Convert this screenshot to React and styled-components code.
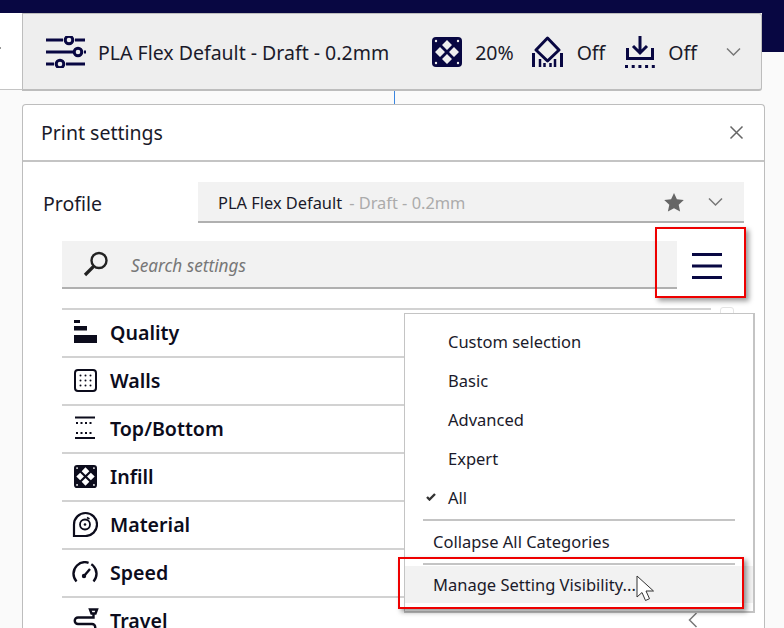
import React from "react";
import styled, { createGlobalStyle } from "styled-components";

const NAVY = "#080742";
const INK = "#1a1a2a";
const DARK = "#0c0c1c";

const Global = createGlobalStyle`
  html, body { margin: 0; padding: 0; background: #fafafa; }
  * { box-sizing: border-box; }
`;

const Page = styled.div`
  position: relative;
  width: 784px;
  height: 628px;
  overflow: hidden;
  background: #fafafa;
  font-family: "Noto Sans", sans-serif;
  color: ${INK};
`;

const Header = styled.header`
  display: flex;
  height: 91px;
  padding-top: 13px;
  background: linear-gradient(${NAVY} 13px, #fafafa 13px);
`;
const LeftStub = styled.div`
  width: 22px;
  height: 77px;
  background: #fff;
  border-bottom: 1px solid #c4c4c4;
  &::after {
    content: "";
    display: block;
    width: 1px;
    height: 2px;
    background: #999;
    margin-top: 34px;
  }
`;
const RightStub = styled.div`
  width: 22px;
  height: 39px;
  background: ${NAVY};
`;
const Toolbar = styled.div`
  width: 740px;
  height: 78px;
  display: flex;
  align-items: center;
  padding: 0 20px 0 23px;
  background: #eeeeee;
  border: 1px solid #bdbdbd;
  border-width: 1px 1px 2px 1px;
  border-radius: 0 3px 3px 0;
`;
const ToolbarLabel = styled.span`
  font-size: 19.5px;
  line-height: 26px;
  margin-left: ${(p) => p.$gap}px;
  margin-right: ${(p) => p.$after || 0}px;
  white-space: nowrap;
  position: relative;
  top: 1px;
`;
const Connector = styled.div`
  width: 1px;
  height: 13px;
  margin-left: 394px;
  background: #3a86e0;
`;

const Panel = styled.section`
  width: 743px;
  height: 540px;
  margin-left: 22px;
  background: #fff;
  border: 1px solid #bdbdbd;
  border-bottom: 0;
  border-radius: 4px 4px 0 0;
`;
const PanelHead = styled.div`
  height: 57px;
  display: flex;
  align-items: center;
  justify-content: space-between;
  padding: 0 20px 0 18px;
  border-bottom: 2px solid #c4c4c4;
`;
const PanelTitle = styled.h2`
  margin: 0;
  font-size: 19.5px;
  font-weight: 400;
  line-height: 26px;
`;
const ProfileRow = styled.div`
  display: flex;
  align-items: center;
  height: 41px;
  margin-top: 20px;
  padding-right: 20px;
`;
const ProfileLabel = styled.span`
  width: 175px;
  padding-left: 20px;
  font-size: 19.5px;
  line-height: 26px;
  position: relative;
  top: 1px;
`;
const ProfileSelect = styled.div`
  flex: 1;
  height: 41px;
  display: flex;
  align-items: center;
  padding: 1px 21px 0 20px;
  background: #f2f2f2;
  border-bottom: 2px solid #b0b0b0;
  font-size: 16.4px;
`;
const ProfileName = styled.span`
  line-height: 22px;
  position: relative;
  top: 1px;
`;
const ProfileDim = styled(ProfileName)`
  color: #ababab;
  margin-left: 7px;
`;
const Spacer = styled.div`
  flex: ${(p) => (p.$w ? `0 0 ${p.$w}px` : 1)};
`;
const SearchRow = styled.div`
  display: flex;
  height: 48px;
  margin: 18px 0 0 39px;
`;
const SearchBox = styled.div`
  width: 615px;
  height: 48px;
  display: flex;
  align-items: center;
  padding: 0 0 1px 21px;
  background: #f2f2f2;
  border-bottom: 2px solid #b0b0b0;
`;
const SearchText = styled.span`
  margin-left: 22px;
  font-size: 17.2px;
  font-style: italic;
  color: #777;
  position: relative;
  top: 2px;
`;
const MenuButton = styled.div`
  width: 60px;
  display: flex;
  align-items: center;
  justify-content: center;
  padding-top: 2px;
`;
const List = styled.div`
  width: 649px;
  margin: 19px 0 0 39px;
`;
const Row = styled.div`
  height: 48px;
  display: flex;
  align-items: center;
  padding: 0 0 2px 12px;
  border-top: 2px solid #d2d2d2;
`;
const RowIcon = styled.div`
  width: 36px;
  display: flex;
  align-items: center;
`;
const RowLabel = styled.span`
  font-size: 19.6px;
  font-weight: 600;
  color: ${DARK};
`;

const Menu = styled.div`
  position: absolute;
  left: 404px;
  top: 313px;
  width: 351px;
  height: 300px;
  padding-top: 8px;
  background: #fff;
  border: 1px solid #c4c4c4;
  border-width: 1px 2px 2px 1px;
`;
const MenuItem = styled.div`
  height: 39px;
  display: flex;
  align-items: center;
  padding-left: 43px;
  font-size: 16.5px;
  position: relative;
`;
const Check = styled.span`
  position: absolute;
  left: 21px;
  top: 15px;
  display: flex;
`;
const Rule = styled.div`
  height: 2px;
  margin: ${(p) => p.$mt || 0}px 18px 0;
  background: #c4c4c4;
`;
const MenuAction = styled.div`
  display: flex;
  align-items: center;
  padding: 0 0 ${(p) => p.$pb || 0}px 28px;
  font-size: 16.5px;
  height: ${(p) => p.$h}px;
  margin-top: ${(p) => p.$mt || 0}px;
  background: ${(p) => (p.$hover ? "#f2f2f2" : "transparent")};
`;
const Chevron = styled.div`
  position: absolute;
  left: 688px;
  top: 612px;
  display: flex;
`;
const Callout = styled.div`
  position: absolute;
  left: ${(p) => p.$x}px;
  top: ${(p) => p.$y}px;
  width: ${(p) => p.$w}px;
  height: ${(p) => p.$h}px;
  border: 2px solid #ee0000;
  box-shadow: 3px 3px 5px rgba(0, 0, 0, 0.4);
`;
const Pointer = styled.div`
  position: absolute;
  left: 636px;
  top: 575px;
  display: flex;
`;
const ScrollTab = styled.div`
  position: absolute;
  left: 720px;
  top: 307px;
  width: 14px;
  height: 8px;
  border: 1px solid #e4e4e4;
  border-radius: 3px 3px 0 0;
`;

const Sliders = () => (
  <svg width="40" height="32" viewBox="0 0 40 32" fill="none" stroke={NAVY} strokeWidth="3">
    <path d="M0 4h17M29 4h10M0 16h27M38 16h2M0 28h8M20 28h19" />
    <circle cx="23" cy="4" r="3.8" />
    <circle cx="32" cy="16" r="3.8" />
    <circle cx="14" cy="28" r="3.8" />
  </svg>
);
const InfillIcon = ({ size = 30, c = NAVY, bg = "#eee" }) => (
  <svg width={size} height={size} viewBox="0 0 30 30">
    <rect width="30" height="30" rx="4" fill={c} />
    <g fill={bg}>
      <path d="M15 3l5 5-5 5-5-5zM15 17l5 5-5 5-5-5zM8 10l5 5-5 5-5-5zM22 10l5 5-5 5-5-5z" />
      <circle cx="4" cy="4" r="1.200" />
      <circle cx="26" cy="4" r="1.200" />
      <circle cx="4" cy="26" r="1.200" />
      <circle cx="26" cy="26" r="1.200" />
    </g>
  </svg>
);
const SupportIcon = () => (
  <svg width="31" height="32" viewBox="0 0 31 32" fill="none" stroke={NAVY}>
    <path d="M15.500 2L27 14 15.500 25 4 14z" strokeWidth="3" strokeLinejoin="round" />
    <path d="M1.500 31V17M29.500 31V17" strokeWidth="3" />
    <path d="M8 31V23M12.500 31v-4M18.500 31v-4M23 31V23" strokeWidth="2.500" />
  </svg>
);
const AdhesionIcon = () => (
  <svg width="30" height="32" viewBox="0 0 30 32" fill="none" stroke={NAVY}>
    <path d="M15 0v17M8 10l7 7 7-7" strokeWidth="3" />
    <path d="M2.500 12v10.500h25V12" strokeWidth="3" />
    <path d="M0 30.500h30" strokeWidth="3" strokeDasharray="3 3.700" />
  </svg>
);
const ChevronDown = ({ w = 15, c = "#777" }) => (
  <svg width={w} height="10" viewBox="0 0 15 10" fill="none" stroke={c} strokeWidth="1.500">
    <path d="M1 1.500l6.500 6.500L14 1.500" />
  </svg>
);
const Close = () => (
  <svg width="15" height="15" viewBox="0 0 15 15" fill="none" stroke="#666" strokeWidth="1.500">
    <path d="M1.500 1.500l12 12M13.500 1.500l-12 12" />
  </svg>
);
const Star = () => (
  <svg width="20" height="19" viewBox="0 0 20 19" fill="#666">
    <path d="M10 0l2.900 6.300 6.900.8-5.100 4.700 1.400 6.800L10 15.200l-6.100 3.400 1.400-6.800L.2 7.100l6.900-.8z" />
  </svg>
);
const Search = () => (
  <svg width="26" height="26" viewBox="0 0 26 26" fill="none" stroke="#222">
    <circle cx="16" cy="9.500" r="7.500" strokeWidth="2.400" />
    <path d="M10.500 15.500L2 24" strokeWidth="3.200" />
  </svg>
);
const Burger = () => (
  <svg width="30" height="28" viewBox="0 0 30 28" fill="none" stroke={NAVY} strokeWidth="3">
    <path d="M0 2.500h30M0 14h30M0 25.500h30" />
  </svg>
);
const QualityIcon = () => (
  <svg width="23" height="24" viewBox="0 0 23 24" fill={DARK}>
    <rect x="0" y="0" width="6" height="3" />
    <rect x="0" y="6" width="13" height="4.500" />
    <rect x="0" y="15" width="23" height="8" />
  </svg>
);
const WallsIcon = () => (
  <svg width="23" height="23" viewBox="0 0 23 23">
    <rect x="1" y="1" width="21" height="21" rx="3" fill="none" stroke={DARK} strokeWidth="2" />
    <g fill={DARK}>
      {[6.5, 11.5, 16.5].flatMap((y) =>
        [6.5, 11.5, 16.5].map((x) => <circle key={`${x}-${y}`} cx={x} cy={y} r="1" />)
      )}
    </g>
  </svg>
);
const TopBottomIcon = () => (
  <svg width="22" height="24" viewBox="0 0 22 24" fill="none" stroke={DARK}>
    <path d="M1 1.500h20M1 22h20" strokeWidth="2.200" />
    <path d="M2 7h18M2 17h18" strokeWidth="1.800" strokeDasharray="2 2.500" />
  </svg>
);
const MaterialIcon = () => (
  <svg width="26" height="26" viewBox="0 0 26 26" fill="none" stroke={DARK} style={{ marginLeft: -2 }}>
    <path d="M2 25H13.500A11.500 11.500 0 1 0 2 13.500z" strokeWidth="2.200" />
    <circle cx="13" cy="13.500" r="5" strokeWidth="1.800" />
    <circle cx="13" cy="13.500" r="1.300" fill={DARK} stroke="none" />
    <path d="M15 6.500l2.500 1.500" strokeWidth="1.800" />
  </svg>
);
const SpeedIcon = () => (
  <svg width="26" height="22" viewBox="0 0 26 22" fill="none" stroke={DARK} strokeWidth="2.400" style={{ marginLeft: -2 }}>
    <path d="M4.500 20.500A11.500 11.500 0 1 1 21.500 20.500" strokeDasharray="30 3 30" />
    <path d="M12 15l6-7" />
    <circle cx="12" cy="15" r="2.200" fill={DARK} stroke="none" />
  </svg>
);
const TravelIcon = () => (
  <svg width="26" height="24" viewBox="0 0 26 24" fill="none" stroke={DARK} strokeWidth="2.400" style={{ marginLeft: -1 }}>
    <path d="M17 1.500h7l-1.500 4h-4zM20.500 6v3.500H5a3 3 0 0 0 0 6.500h14a3 3 0 0 1 0 6.500H1" />
  </svg>
);
const CheckMark = () => (
  <svg width="10" height="8" viewBox="0 0 10 8" fill="none" stroke="#333" strokeWidth="2.400">
    <path d="M1 4l2.500 2.500L9 1" />
  </svg>
);
const ChevronLeft = () => (
  <svg width="10" height="16" viewBox="0 0 10 16" fill="none" stroke="#777" strokeWidth="1.500">
    <path d="M8.500 1L1.500 8l7 7" />
  </svg>
);
const Cursor = () => (
  <svg width="19" height="29" viewBox="0 0 19 29" fill="#fff" stroke="#333" strokeWidth="1">
    <path d="M1 1v21l5-4.500 3.500 8 4-1.800-3.500-7.700h7.500z" />
  </svg>
);

const rows = [
  ["Quality", QualityIcon],
  ["Walls", WallsIcon],
  ["Top/Bottom", TopBottomIcon],
  ["Infill", () => <InfillIcon size={23} c={DARK} bg="#fff" />],
  ["Material", MaterialIcon],
  ["Speed", SpeedIcon],
  ["Travel", TravelIcon],
];

export default function App() {
  return (
    <Page>
      <Global />
      <Header>
        <LeftStub />
        <Toolbar>
          <Sliders />
          <ToolbarLabel $gap={12} $after={43}>PLA Flex Default - Draft - 0.2mm</ToolbarLabel>
          <InfillIcon />
          <ToolbarLabel $gap={13} $after={18}>20%</ToolbarLabel>
          <SupportIcon />
          <ToolbarLabel $gap={14} $after={20}>Off</ToolbarLabel>
          <AdhesionIcon />
          <ToolbarLabel $gap={13}>Off</ToolbarLabel>
          <Spacer />
          <ChevronDown />
        </Toolbar>
        <RightStub />
      </Header>
      <Connector />
      <Panel>
        <PanelHead>
          <PanelTitle>Print settings</PanelTitle>
          <Close />
        </PanelHead>
        <ProfileRow>
          <ProfileLabel>Profile</ProfileLabel>
          <ProfileSelect>
            <ProfileName>PLA Flex Default</ProfileName>
            <ProfileDim>- Draft - 0.2mm</ProfileDim>
            <Spacer />
            <Star />
            <Spacer $w={24} />
            <ChevronDown />
          </ProfileSelect>
        </ProfileRow>
        <SearchRow>
          <SearchBox>
            <Search />
            <SearchText>Search settings</SearchText>
          </SearchBox>
          <MenuButton>
            <Burger />
          </MenuButton>
        </SearchRow>
        <List>
          {rows.map(([label, Icon]) => (
            <Row key={label}>
              <RowIcon>
                <Icon />
              </RowIcon>
              <RowLabel>{label}</RowLabel>
            </Row>
          ))}
        </List>
      </Panel>
      <ScrollTab />
      <Chevron>
        <ChevronLeft />
      </Chevron>
      <Menu>
        <MenuItem>Custom selection</MenuItem>
        <MenuItem>Basic</MenuItem>
        <MenuItem>Advanced</MenuItem>
        <MenuItem>Expert</MenuItem>
        <MenuItem>
          <Check>
            <CheckMark />
          </Check>
          All
        </MenuItem>
        <Rule $mt={2} />
        <MenuAction $h={42} $pb={2}>Collapse All Categories</MenuAction>
        <Rule />
        <MenuAction $h={37} $mt={1} $hover>
          Manage Setting Visibility...
        </MenuAction>
      </Menu>
      <Callout $x={655} $y={227} $w={91} $h={71} />
      <Callout $x={398} $y={557} $w={346} $h={52} />
      <Pointer>
        <Cursor />
      </Pointer>
    </Page>
  );
}
